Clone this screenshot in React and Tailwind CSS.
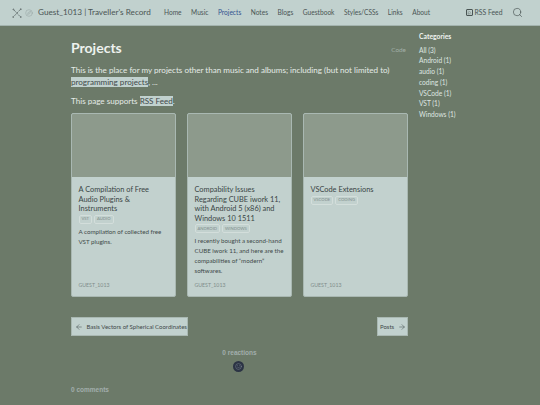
import { ArrowLeft, ArrowRight, Rss, Search, Smile, Compass } from 'lucide-react';

const navLinks = ['Home', 'Music', 'Projects', 'Notes', 'Blogs', 'Guestbook', 'Styles/CSSs', 'Links', 'About'];

const categories = ['All (3)', 'Android (1)', 'audio (1)', 'coding (1)', 'VSCode (1)', 'VST (1)', 'Windows (1)'];

const projects = [
  {
    title: 'A Compilation of Free\nAudio Plugins &\nInstruments',
    tags: ['VST', 'AUDIO'],
    text: 'A compilation of collected free VST plugins.',
  },
  {
    title: 'Compability Issues\nRegarding CUBE iwork 11,\nwith Android 5 (x86) and\nWindows 10 1511',
    tags: ['ANDROID', 'WINDOWS'],
    text: 'I recently bought a second-hand CUBE iwork 11, and here are the compabilities of “modern” softwares.',
  },
  {
    title: 'VSCode Extensions',
    tags: ['VSCODE', 'CODING'],
    text: '',
  },
];

const Tag = ({ name }) => (
  <span className="rounded-[2px] border border-[#d3dedb] px-[2px] h-[9px] flex items-center text-[4.2px] text-[#7f8d8b]">{name}</span>
);

const Card = ({ project }) => (
  <div className="flex-1 h-[184px] flex flex-col rounded-[2px] overflow-hidden bg-[#c2d1ce] border border-[#a9b8b2]">
    <div className="h-[63px] bg-[#8d9a8c] shrink-0" />
    <div className="flex-1 flex flex-col px-[6.5px] pt-[8px] pb-[8px]">
      <h3 className="text-[7.4px] leading-[9.6px] text-[#3a4545] whitespace-pre-line">{project.title}</h3>
      <div className="flex gap-[2px] mt-[1px]">
        {project.tags.map((t) => (
          <Tag key={t} name={t} />
        ))}
      </div>
      <p className="mt-[3px] text-[6.2px] leading-[9.8px] text-[#3f4a4a]">{project.text}</p>
      <div className="mt-auto text-[5.2px] leading-[6px] text-[#7f8d8b]">GUEST_1013</div>
    </div>
  </div>
);

const Logo = () => (
  <svg viewBox="0 0 10 10" className="w-[10px] h-[10px] text-[#3f4a4a]" fill="none" stroke="currentColor" strokeWidth="0.6">
    <path d="M2 2 L8 8.5 M8.2 1.6 L1.8 8.5" strokeDasharray="2.4 0.7" />
    <circle cx="1.4" cy="1.4" r="0.5" />
    <circle cx="8.8" cy="1.2" r="0.5" />
    <circle cx="1.2" cy="9" r="0.5" />
    <circle cx="8.8" cy="9" r="0.5" />
  </svg>
);

export default function App() {
  return (
    <div className="w-[540px] h-[405px] overflow-hidden bg-[#6c7a69] font-['Lato',sans-serif]">
      <header className="h-[26px] bg-[#c1d1ce] border-b border-[#a3b3ae] flex items-center pl-[12px] text-[#4a5554]">
        <Logo />
        <Compass size={8} strokeWidth={1} className="ml-[3px] text-[#7f8d8b]" />
        <span className="ml-[5px] w-[115px] text-[8.2px] whitespace-nowrap">Guest_1013 | Traveller's Record</span>
        <nav className="ml-[11px] flex gap-[9.5px] text-[6.6px]">
          {navLinks.map((link) => (
            <a key={link} className={link === 'Projects' ? 'text-[#31548f]' : ''}>
              {link}
            </a>
          ))}
        </nav>
        <div className="ml-[36px] flex items-center gap-[1.5px] text-[6.8px]">
          <span className="w-[7px] h-[7px] border border-[#4a5554] rounded-[1px] flex items-center justify-center">
            <Rss size={5} strokeWidth={1.5} />
          </span>
          <span>RSS Feed</span>
        </div>
        <Search size={11} strokeWidth={1.2} className="ml-[9px] text-[#333c3c]" />
      </header>

      <div className="flex pl-[71px]">
        <main className="w-[337px]">
          <div className="flex items-end justify-between pt-[13px]">
            <h1 className="text-[14px] leading-[18px] font-bold text-[#eef2ef]">Projects</h1>
            <span className="text-[6.4px] leading-[8px] text-[#a3b0a8] mr-[2px] mb-[3px]">Code</span>
          </div>
          <p className="mt-[7px] text-[8.07px] leading-[12px] text-[#e4ebe6]">
            This is the place for my projects other than music and albums; including (but not limited to){' '}
            <span className="bg-[#c1d1ce] text-[#3f4a4a]">programming projects</span>, ...
          </p>
          <p className="mt-[7px] text-[8.07px] leading-[12px] text-[#e4ebe6]">
            This page supports <span className="bg-[#c1d1ce] text-[#3f4a4a]">RSS Feed</span>.
          </p>
          <div className="flex gap-[11px] mt-[6px]">
            {projects.map((p) => (
              <Card key={p.title} project={p} />
            ))}
          </div>
          <div className="flex justify-between mt-[20px]">
            <a className="h-[19px] flex items-center bg-[#c1d1ce] border border-[#a9b8b2] text-[#3f4a4a] text-[6px] pl-[3px] gap-[3.5px] w-[117px] whitespace-nowrap">
              <ArrowLeft size={8} strokeWidth={1.5} className="shrink-0" />
              <span>Basis Vectors of Spherical Coordinates</span>
            </a>
            <a className="h-[19px] flex items-center bg-[#c1d1ce] border border-[#a9b8b2] text-[#3f4a4a] text-[6px] pl-[2px] gap-[4px] w-[31px]">
              <span>Posts</span>
              <ArrowRight size={8} strokeWidth={1.5} className="shrink-0" />
            </a>
          </div>
          <div className="mt-[13px] flex flex-col items-center font-['Liberation_Sans',sans-serif]">
            <span className="text-[6.5px] leading-[8px] font-bold text-[#a2aeac]">0 reactions</span>
            <span className="mt-[4px] mr-[3px] w-[11px] h-[11px] rounded-full bg-[#2b3344] flex items-center justify-center text-[#8a93a0]">
              <Smile size={7} strokeWidth={1.5} />
            </span>
          </div>
          <div className="mt-[14px] text-[6.5px] leading-[8px] font-bold text-[#a2aeac] font-['Liberation_Sans',sans-serif]">0 comments</div>
        </main>

        <aside className="ml-[11px] pt-[5px] text-[6.6px] text-[#dfe6e1]">
          <h2 className="font-bold text-[6.8px] leading-[10px] text-[#eef2ef]">Categories</h2>
          <ul className="mt-[3.5px]">
            {categories.map((c) => (
              <li key={c} className="leading-[10.8px] whitespace-nowrap">
                {c}
              </li>
            ))}
          </ul>
        </aside>
      </div>
    </div>
  );
}
